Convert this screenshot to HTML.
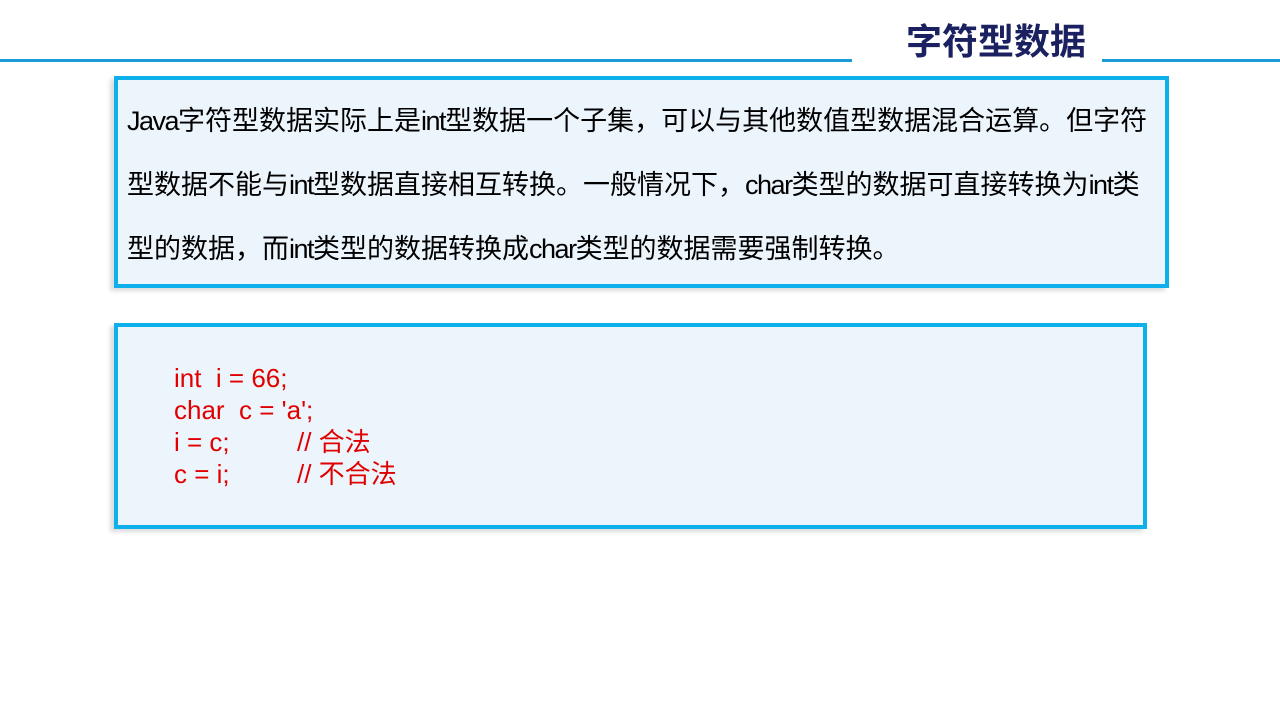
<!DOCTYPE html>
<html><head><meta charset="utf-8"><style>
body{margin:0;width:1280px;height:720px;background:#fff;position:relative;overflow:hidden;font-family:"Liberation Sans","Noto Sans CJK SC",sans-serif;}
.l{position:absolute;top:59px;height:3px;background:#1a9ad6;}
.t{position:absolute;left:906px;top:18px;font-size:36px;font-weight:bold;color:#1b2160;line-height:48px;}
.b{position:absolute;box-sizing:border-box;border:4px solid #0db0eb;background:#edf5fc;box-shadow:-4px 3px 4px #ddd;}
.p{position:absolute;left:9px;top:9px;font-size:27px;line-height:64px;color:#000;white-space:nowrap;}
.p span{letter-spacing:-1.5px;}
.c{position:absolute;left:56px;top:35px;font-size:26px;line-height:32px;color:#e00000;white-space:pre;}
.c div{position:relative;height:32px;}
.c i{font-style:normal;position:absolute;left:123px;top:0;}
</style></head><body>
<div class="l" style="left:0;width:852px"></div>
<div class="l" style="left:1102px;width:178px"></div>
<div class="t">字符型数据</div>
<div class="b" style="left:114px;top:76px;width:1055px;height:212px">
<div class="p"><span>Java</span>字符型数据实际上是<span>int</span>型数据一个子集，可以与其他数值型数据混合运算。但字符<br>型数据不能与<span>int</span>型数据直接相互转换。一般情况下，<span>char</span>类型的数据可直接转换为<span>int</span>类<br>型的数据，而<span>int</span>类型的数据转换成<span>char</span>类型的数据需要强制转换。</div>
</div>
<div class="b" style="left:114px;top:323px;width:1033px;height:206px">
<div class="c"><div>int  i = 66;</div><div>char  c = 'a';</div><div>i = c;<i>// 合法</i></div><div>c = i;<i>// 不合法</i></div></div>
</div>
</body></html>
